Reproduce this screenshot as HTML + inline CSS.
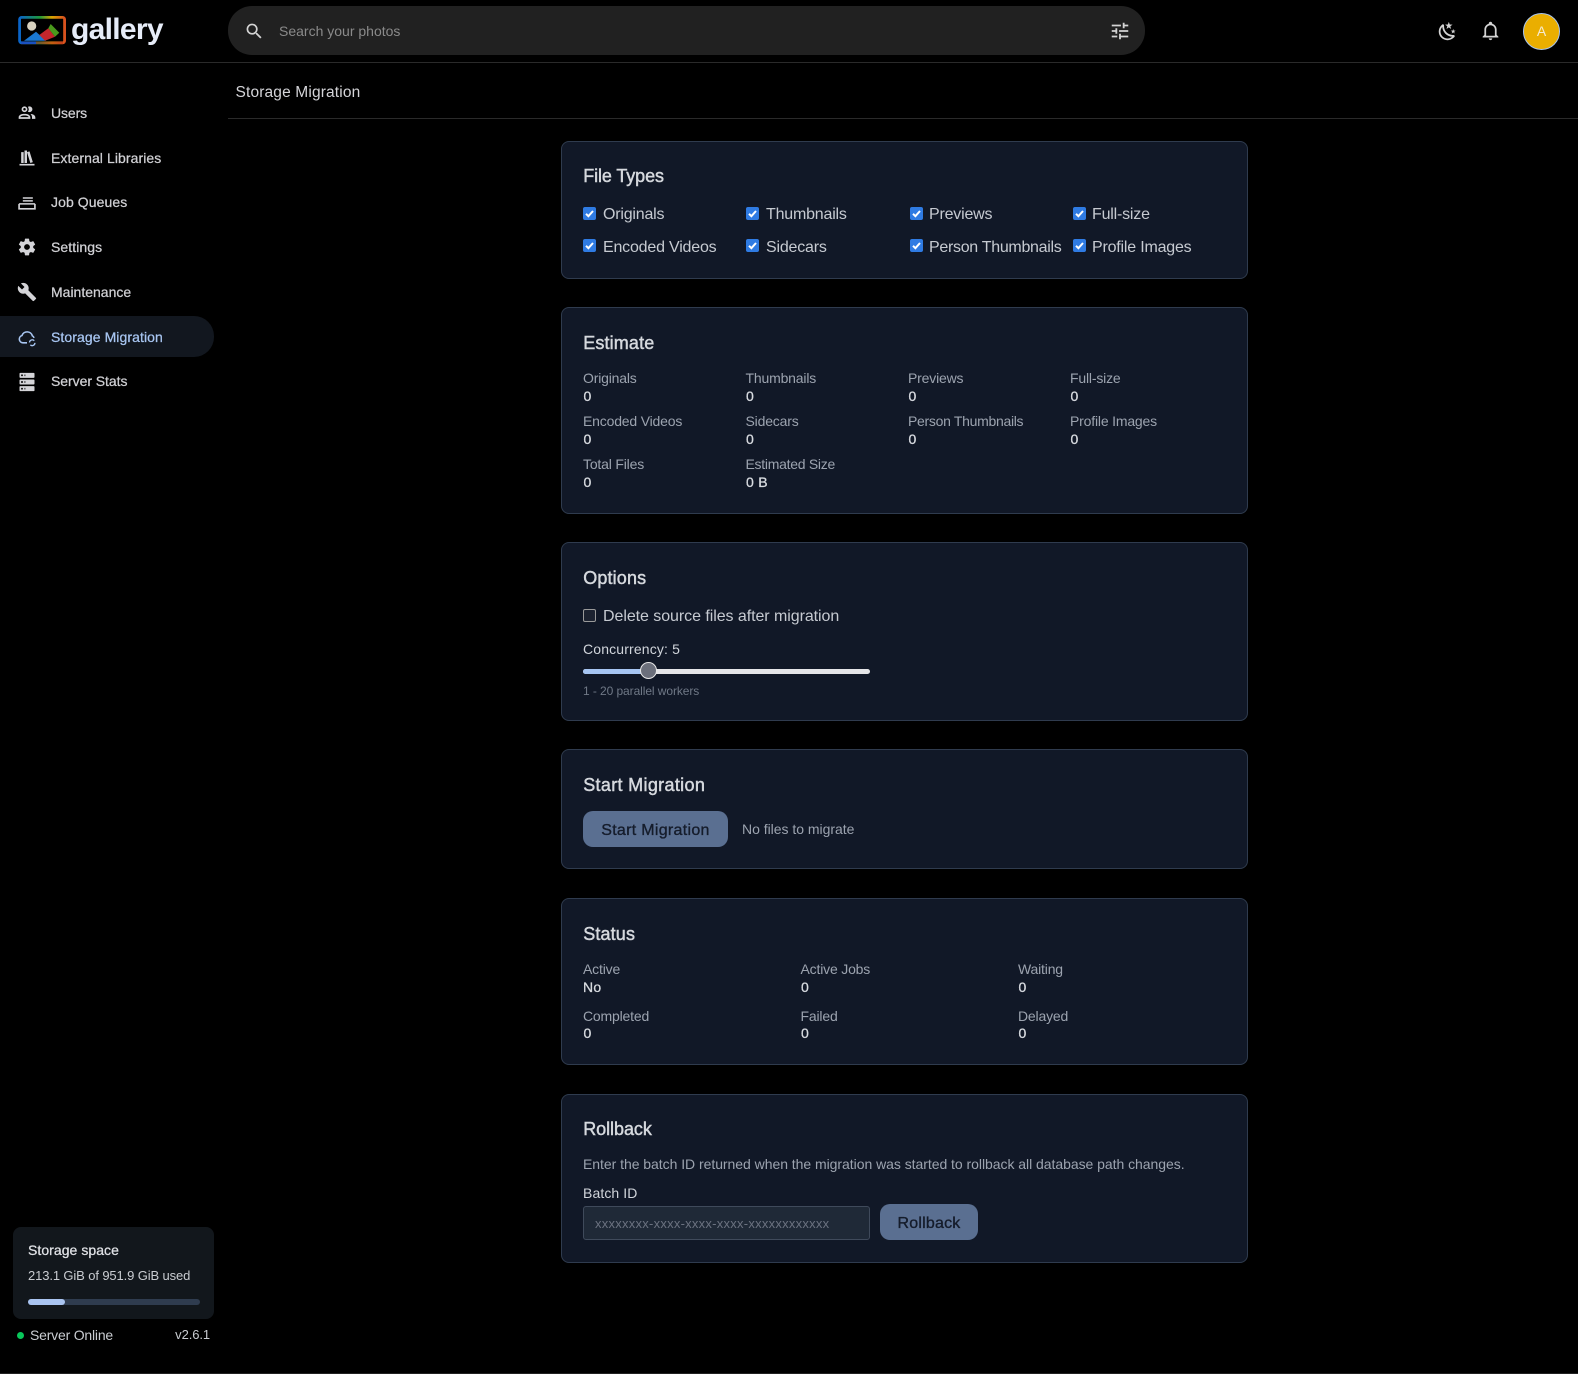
<!DOCTYPE html>
<html lang="en"><head><meta charset="utf-8"><title>Storage Migration</title>
<style>
html,body{margin:0;padding:0;background:#000;width:1578px;height:1374px;overflow:hidden}
body{position:relative;font-family:"Liberation Sans",sans-serif;color:#e5e7eb}
.a{position:absolute}
.t{position:absolute;line-height:20px;height:20px;white-space:nowrap}
.nav{font-size:14px;color:#d0d0d4;left:51px;font-weight:400;letter-spacing:.08px;-webkit-text-stroke:.25px #d0d0d4}
.card{position:absolute;left:561px;width:685px;background:#111827;border:1px solid #2f3b4e;border-radius:8px}
.h{left:583.2px;font-size:18px;color:#d6d9de;letter-spacing:.15px;-webkit-text-stroke:.45px #d6d9de}
.cb{position:absolute;width:13px;height:13px;background:#2f7be3;border-radius:2px}
.cb svg{position:absolute;left:0;top:0}
.l{font-size:16px;color:#c6cad1;letter-spacing:-.2px}
.k{font-size:14px;color:#9ca3af;letter-spacing:-.18px}
.v{font-size:14px;color:#d8dbe0;letter-spacing:.3px;-webkit-text-stroke:.3px #d8dbe0}
.btn{position:absolute;background:#5a6f91;border-radius:10px;color:#151c2b;font-size:16px;text-align:center;letter-spacing:.2px;-webkit-text-stroke:.35px #151c2b}
svg{position:absolute;display:block}
</style></head><body>

<!-- logo -->
<svg style="left:18px;top:15px" width="49" height="31" viewBox="0 0 49 31">
<defs><linearGradient id="r" x1="0" y1="0" x2="1" y2="0"><stop offset="0" stop-color="#0a64c8"/><stop offset=".45" stop-color="#1f9a3a"/><stop offset=".72" stop-color="#d9a400"/><stop offset="1" stop-color="#d8501f"/></linearGradient></defs>
<rect x="1.6" y="2.4" width="45" height="25.4" rx="2" fill="none" stroke="url(#r)" stroke-width="2.8"/>
<path d="M3 27.8H45" stroke="#b3261f" stroke-width="2.6" opacity=".55"/>
<path d="M3 27.8H18" stroke="#1a50c0" stroke-width="2.6"/>
<circle cx="13.7" cy="11" r="4.6" fill="#d8d2c0"/>
<path d="M6 25.7L18 16.7L28 25.7Z" fill="#1a78d2"/>
<path d="M21.3 20L30.3 13.3L37 21.7L27 25.7Z" fill="#c4262c"/>
<path d="M30.3 13.3L32.7 9L41.3 17.7L37 21.7Z" fill="#4a9a1c"/>
</svg>
<div class="t" style="left:71px;top:13px;height:34px;line-height:34px;font-size:30px;font-weight:bold;color:#e6ecf8;letter-spacing:-.7px">gallery</div>

<div class="a" style="left:0;top:62px;width:1578px;height:1px;background:#2a2a2a"></div>

<!-- search -->
<div class="a" style="left:228px;top:6px;width:917px;height:49px;background:#212121;border-radius:24px"></div>
<svg style="left:243.5px;top:20.5px" width="20.5" height="20.5" viewBox="0 0 24 24" fill="#d4d4d4"><path d="M9.5,3A6.5,6.5 0 0,1 16,9.5C16,11.11 15.41,12.59 14.44,13.73L14.71,14H15.5L20.5,19L19,20.5L14,15.5V14.71L13.73,14.44C12.59,15.41 11.11,16 9.5,16A6.5,6.5 0 0,1 3,9.5A6.5,6.5 0 0,1 9.5,3M9.5,5C7,5 5,7 5,9.5C5,12 7,14 9.5,14C12,14 14,12 14,9.5C14,7 12,5 9.5,5Z"/></svg>
<div class="t" style="left:279px;top:21px;font-size:14px;color:#8a8a8a;letter-spacing:0">Search your photos</div>
<svg style="left:1108.5px;top:20px" width="22" height="22" viewBox="0 0 24 24" fill="#d4d4d4"><path d="M3,17V19H9V17H3M3,5V7H13V5H3M13,21V19H21V17H13V15H11V21H13M7,9V11H3V13H7V15H9V9H7M21,13V11H11V13H21M15,9H17V7H21V5H17V3H15V9Z"/></svg>
<svg style="left:1437.3px;top:20.5px" width="21" height="21" viewBox="0 0 24 24" fill="#d4d4d4"><path d="M17.75,4.09L15.22,6.03L16.13,9.09L13.5,7.28L10.87,9.09L11.78,6.03L9.25,4.09L12.44,4L13.5,1L14.56,4L17.75,4.09M21.25,11L19.61,12.25L20.2,14.23L18.5,13.06L16.8,14.23L17.39,12.25L15.75,11L17.81,10.95L18.5,9L19.19,10.95L21.25,11M18.97,15.95C19.8,15.87 20.69,17.05 20.16,17.8C19.84,18.25 19.5,18.67 19.08,19.07C15.17,23 8.84,23 4.94,19.07C1.03,15.17 1.03,8.83 4.94,4.93C5.34,4.53 5.76,4.17 6.21,3.85C6.96,3.32 8.14,4.21 8.06,5.04C7.79,7.9 8.75,10.87 10.95,13.06C13.14,15.26 16.1,16.22 18.97,15.95M17.33,17.97C14.5,17.81 11.7,16.64 9.53,14.5C7.36,12.31 6.2,9.5 6.04,6.68C3.23,9.82 3.34,14.64 6.35,17.66C9.37,20.67 14.19,20.78 17.33,17.97Z"/></svg>
<svg style="left:1479.8px;top:20px" width="21" height="21" viewBox="0 0 24 24" fill="#d4d4d4"><path d="M10 21H14C14 22.1 13.1 23 12 23S10 22.1 10 21M21 19V20H3V19L5 17V11C5 7.9 7 5.2 10 4.3V4C10 2.9 10.9 2 12 2S14 2.9 14 4V4.3C17 5.2 19 7.9 19 11V17L21 19M17 11C17 8.2 14.8 6 12 6S7 8.2 7 11V18H17V11Z"/></svg>
<div class="a" style="left:1523px;top:13px;width:35px;height:35px;border-radius:50%;background:#eaae00;border:1px solid #a9c4ea;color:#f5ead0;font-size:14px;line-height:35px;text-align:center">A</div>

<!-- page title -->
<div class="t" style="left:235.5px;top:83px;font-size:15.5px;color:#d4d4d8;letter-spacing:.15px">Storage Migration</div>
<div class="a" style="left:228px;top:118px;width:1350px;height:1px;background:#2a2a2a"></div>

<!-- nav -->
<div class="a" style="left:0;top:316px;width:214px;height:41px;background:#12171f;border-radius:0 20px 20px 0"></div>
<svg style="left:16.7px;top:103px" width="20" height="20" viewBox="0 0 24 24" fill="#d4d4d8"><path d="M13.07 10.41A5 5 0 0 0 13.07 4.59A3.39 3.39 0 0 1 15 4A3.5 3.5 0 0 1 15 11A3.39 3.39 0 0 1 13.07 10.41M5.5 7.5A3.5 3.5 0 1 1 9 11A3.5 3.5 0 0 1 5.5 7.5M7.5 7.5A1.5 1.5 0 1 0 9 6A1.5 1.5 0 0 0 7.5 7.5M16 17V19H2V17S2 13 9 13 16 17 16 17M14 17C13.86 16.22 12.67 15 9 15S4.07 16.29 4 17M15.95 13A5.32 5.32 0 0 1 18 17V19H22V17S22 13.37 15.94 13Z"/></svg>
<div class="t nav" style="top:103px;letter-spacing:-.1px">Users</div>
<svg style="left:16.7px;top:148px" width="20" height="20" viewBox="0 0 24 24" fill="#d4d4d8"><path d="M9 3V18H12V3H9M12 5L16 18L19 17L15 4L12 5M5 5V18H8V5H5M3 19V21H21V19H3Z"/></svg>
<div class="t nav" style="top:148px">External Libraries</div>
<svg style="left:16.7px;top:192.5px" width="20" height="20" viewBox="0 0 24 24" fill="none" stroke="#d4d4d8" stroke-width="2"><path d="M2.5 13V19H21.5V13"/><path d="M2.5 13H21.5M7 9.5H19M7 6H19" stroke-width="1.8"/></svg>
<div class="t nav" style="top:192px">Job Queues</div>
<svg style="left:16.7px;top:237px" width="20" height="20" viewBox="0 0 24 24" fill="#d4d4d8"><path d="M12,15.5A3.5,3.5 0 0,1 8.5,12A3.5,3.5 0 0,1 12,8.5A3.5,3.5 0 0,1 15.5,12A3.5,3.5 0 0,1 12,15.5M19.43,12.97C19.47,12.65 19.5,12.33 19.5,12C19.5,11.67 19.47,11.34 19.43,11L21.54,9.37C21.73,9.22 21.78,8.95 21.66,8.73L19.66,5.27C19.54,5.05 19.27,4.96 19.05,5.05L16.56,6.05C16.04,5.66 15.5,5.32 14.87,5.07L14.5,2.42C14.46,2.18 14.25,2 14,2H10C9.75,2 9.54,2.18 9.5,2.42L9.13,5.07C8.5,5.32 7.96,5.66 7.44,6.05L4.95,5.05C4.73,4.96 4.46,5.05 4.34,5.27L2.34,8.73C2.21,8.95 2.27,9.22 2.46,9.37L4.57,11C4.53,11.34 4.5,11.67 4.5,12C4.5,12.33 4.53,12.65 4.57,12.97L2.46,14.63C2.27,14.78 2.21,15.05 2.34,15.27L4.34,18.73C4.46,18.95 4.73,19.03 4.95,18.95L7.44,17.94C7.96,18.34 8.5,18.68 9.13,18.93L9.5,21.58C9.54,21.82 9.75,22 10,22H14C14.25,22 14.46,21.82 14.5,21.58L14.87,18.93C15.5,18.67 16.04,18.34 16.56,17.94L19.05,18.95C19.27,19.03 19.54,18.95 19.66,18.73L21.66,15.27C21.78,15.05 21.73,14.78 21.54,14.63L19.43,12.97Z"/></svg>
<div class="t nav" style="top:237px">Settings</div>
<svg style="left:16.7px;top:281.7px" width="20" height="20" viewBox="0 0 24 24" fill="#d4d4d8"><path d="M22.7,19L13.6,9.9C14.5,7.6 14,4.9 12.1,3C10.1,1 7.1,0.6 4.7,1.7L9,6L6,9L1.6,4.7C0.4,7.1 0.9,10.1 2.9,12.1C4.8,14 7.5,14.5 9.8,13.6L18.9,22.7C19.3,23.1 19.9,23.1 20.3,22.7L22.6,20.4C23.1,20 23.1,19.3 22.7,19Z"/></svg>
<div class="t nav" style="top:282px;letter-spacing:0">Maintenance</div>
<svg style="left:16.7px;top:327px" width="20" height="20" viewBox="0 0 24 24" fill="none" stroke="#a8c6f2" stroke-width="1.9"><path d="M12 19H7A4.5 4.5 0 0 1 6 10.2A6.5 6.5 0 0 1 18.4 10.6A4 4 0 0 1 20.5 13"/><path d="M15 18.5A3.3 3.3 0 0 1 20.7 16.5M21.5 19A3.3 3.3 0 0 1 16 21.5" stroke-width="1.6"/></svg>
<div class="t nav" style="top:327px;color:#a8c6f2;-webkit-text-stroke:.25px #a8c6f2">Storage Migration</div>
<svg style="left:16.7px;top:371.7px" width="20" height="20" viewBox="0 0 24 24" fill="#d4d4d8"><path d="M4,1H20A1,1 0 0,1 21,2V6A1,1 0 0,1 20,7H4A1,1 0 0,1 3,6V2A1,1 0 0,1 4,1M4,9H20A1,1 0 0,1 21,10V14A1,1 0 0,1 20,15H4A1,1 0 0,1 3,14V10A1,1 0 0,1 4,9M4,17H20A1,1 0 0,1 21,18V22A1,1 0 0,1 20,23H4A1,1 0 0,1 3,22V18A1,1 0 0,1 4,17M9,5H10V3H9V5M9,13H10V11H9V13M9,21H10V19H9V21M5,3V5H7V3H5M5,11V13H7V11H5M5,19V21H7V19H5Z"/></svg>
<div class="t nav" style="top:371px;letter-spacing:-.05px">Server Stats</div>

<!-- storage -->
<div class="a" style="left:13px;top:1227px;width:201px;height:92px;background:#12171c;border-radius:8px"></div>
<div class="t" style="left:28px;top:1240px;font-size:14px;color:#e0e2e6;letter-spacing:.05px;-webkit-text-stroke:.25px #e0e2e6">Storage space</div>
<div class="t" style="left:28px;top:1266px;font-size:13px;color:#c9ccd1;letter-spacing:-.12px">213.1 GiB of 951.9 GiB used</div>
<div class="a" style="left:28px;top:1299px;width:172px;height:6px;border-radius:3px;background:#2f3c4f"></div>
<div class="a" style="left:28px;top:1299px;width:37px;height:6px;border-radius:3px;background:#a9c4f0"></div>
<div class="a" style="left:17px;top:1332px;width:7px;height:7px;border-radius:50%;background:#08c75a"></div>
<div class="t" style="left:30px;top:1325px;font-size:14px;color:#c9ccd1;letter-spacing:-.2px">Server Online</div>
<div class="t" style="right:1368px;top:1325px;font-size:13px;color:#c9ccd1;letter-spacing:-.1px">v2.6.1</div>
<div class="a" style="left:0;top:1373px;width:1578px;height:1px;background:#222"></div>

<!-- File types -->
<div class="card" style="top:141px;height:136px"></div>
<div class="t h" style="top:166px;letter-spacing:-.1px">File Types</div>
<div class="cb" style="left:583px;top:207px"><svg width="13" height="13" viewBox="0 0 13 13"><path d="M3 6.8L5.4 9.2L10 4" fill="none" stroke="#fff" stroke-width="2"/></svg></div>
<div class="t l" style="left:603px;top:205px">Originals</div>
<div class="cb" style="left:746px;top:207px"><svg width="13" height="13" viewBox="0 0 13 13"><path d="M3 6.8L5.4 9.2L10 4" fill="none" stroke="#fff" stroke-width="2"/></svg></div>
<div class="t l" style="left:766px;top:205px">Thumbnails</div>
<div class="cb" style="left:909.5px;top:207px"><svg width="13" height="13" viewBox="0 0 13 13"><path d="M3 6.8L5.4 9.2L10 4" fill="none" stroke="#fff" stroke-width="2"/></svg></div>
<div class="t l" style="left:929px;top:205px">Previews</div>
<div class="cb" style="left:1072.5px;top:207px"><svg width="13" height="13" viewBox="0 0 13 13"><path d="M3 6.8L5.4 9.2L10 4" fill="none" stroke="#fff" stroke-width="2"/></svg></div>
<div class="t l" style="left:1092px;top:205px">Full-size</div>
<div class="cb" style="left:583px;top:239px"><svg width="13" height="13" viewBox="0 0 13 13"><path d="M3 6.8L5.4 9.2L10 4" fill="none" stroke="#fff" stroke-width="2"/></svg></div>
<div class="t l" style="left:603px;top:238px">Encoded Videos</div>
<div class="cb" style="left:746px;top:239px"><svg width="13" height="13" viewBox="0 0 13 13"><path d="M3 6.8L5.4 9.2L10 4" fill="none" stroke="#fff" stroke-width="2"/></svg></div>
<div class="t l" style="left:766px;top:238px">Sidecars</div>
<div class="cb" style="left:909.5px;top:239px"><svg width="13" height="13" viewBox="0 0 13 13"><path d="M3 6.8L5.4 9.2L10 4" fill="none" stroke="#fff" stroke-width="2"/></svg></div>
<div class="t l" style="left:929px;top:238px;letter-spacing:-.3px">Person Thumbnails</div>
<div class="cb" style="left:1072.5px;top:239px"><svg width="13" height="13" viewBox="0 0 13 13"><path d="M3 6.8L5.4 9.2L10 4" fill="none" stroke="#fff" stroke-width="2"/></svg></div>
<div class="t l" style="left:1092px;top:238px">Profile Images</div>

<!-- Estimate -->
<div class="card" style="top:307px;height:205px"></div>
<div class="t h" style="top:333px">Estimate</div>
<div class="t k" style="left:583px;top:367.5px">Originals</div><div class="t v" style="left:583.5px;top:385.5px">0</div>
<div class="t k" style="left:745.5px;top:367.5px">Thumbnails</div><div class="t v" style="left:746px;top:385.5px">0</div>
<div class="t k" style="left:908px;top:367.5px">Previews</div><div class="t v" style="left:908.5px;top:385.5px">0</div>
<div class="t k" style="left:1070px;top:367.5px">Full-size</div><div class="t v" style="left:1070.5px;top:385.5px">0</div>
<div class="t k" style="left:583px;top:410.5px">Encoded Videos</div><div class="t v" style="left:583.5px;top:428.5px">0</div>
<div class="t k" style="left:745.5px;top:410.5px">Sidecars</div><div class="t v" style="left:746px;top:428.5px">0</div>
<div class="t k" style="left:908px;top:410.5px;letter-spacing:-.3px">Person Thumbnails</div><div class="t v" style="left:908.5px;top:428.5px">0</div>
<div class="t k" style="left:1070px;top:410.5px">Profile Images</div><div class="t v" style="left:1070.5px;top:428.5px">0</div>
<div class="t k" style="left:583px;top:454px">Total Files</div><div class="t v" style="left:583.5px;top:472px">0</div>
<div class="t k" style="left:745.5px;top:454px;letter-spacing:-.28px">Estimated Size</div><div class="t v" style="left:746px;top:472px">0 B</div>

<!-- Options -->
<div class="card" style="top:542px;height:177px"></div>
<div class="t h" style="top:568px">Options</div>
<div class="a" style="left:583px;top:609px;width:11px;height:11px;background:#1c2230;border:1px solid #9a9a9a;border-radius:2px"></div>
<div class="t l" style="left:603px;top:607px;letter-spacing:-.06px">Delete source files after migration</div>
<div class="t" style="left:583px;top:639px;font-size:14px;color:#d1d5db;letter-spacing:.15px">Concurrency: 5</div>
<div class="a" style="left:583px;top:668.5px;width:287px;height:5px;border-radius:3px;background:#e5e5e8"></div>
<div class="a" style="left:583px;top:668.5px;width:66px;height:5px;border-radius:3px 0 0 3px;background:#a6c5f2"></div>
<div class="a" style="left:640px;top:662px;width:15px;height:15px;border-radius:50%;background:#6b6f7b;border:1.5px solid #e8e8e8"></div>
<div class="t" style="left:583px;top:681px;font-size:12px;color:#6f7886;letter-spacing:-.08px">1 - 20 parallel workers</div>

<!-- Start -->
<div class="card" style="top:749px;height:118px"></div>
<div class="t h" style="top:775px;letter-spacing:.33px">Start Migration</div>
<div class="btn" style="left:583px;top:811px;width:145px;height:36px;line-height:39px;letter-spacing:.3px">Start Migration</div>
<div class="t" style="left:742px;top:818.5px;font-size:14px;color:#9ca3af;letter-spacing:-.02px">No files to migrate</div>

<!-- Status -->
<div class="card" style="top:898px;height:165px"></div>
<div class="t h" style="top:924px">Status</div>
<div class="t k" style="left:583px;top:959px">Active</div><div class="t v" style="left:583px;top:977px">No</div>
<div class="t k" style="left:800.5px;top:959px">Active Jobs</div><div class="t v" style="left:801px;top:977px">0</div>
<div class="t k" style="left:1018px;top:959px">Waiting</div><div class="t v" style="left:1018.5px;top:977px">0</div>
<div class="t k" style="left:583px;top:1005.5px">Completed</div><div class="t v" style="left:583.5px;top:1022.5px">0</div>
<div class="t k" style="left:800.5px;top:1005.5px">Failed</div><div class="t v" style="left:801px;top:1022.5px">0</div>
<div class="t k" style="left:1018px;top:1005.5px">Delayed</div><div class="t v" style="left:1018.5px;top:1022.5px">0</div>

<!-- Rollback -->
<div class="card" style="top:1094px;height:167px"></div>
<div class="t h" style="top:1119px;letter-spacing:-.05px">Rollback</div>
<div class="t k" style="left:583px;top:1154px;letter-spacing:-.04px">Enter the batch ID returned when the migration was started to rollback all database path changes.</div>
<div class="t" style="left:583px;top:1183px;font-size:14px;color:#d1d5db;letter-spacing:.1px">Batch ID</div>
<div class="a" style="left:583px;top:1206px;width:285px;height:32px;background:#1f2937;border:1px solid #3f4a5b;border-radius:3px"></div>
<div class="t" style="left:595px;top:1214px;font-size:13px;color:#6b7280;letter-spacing:.25px">xxxxxxxx-xxxx-xxxx-xxxx-xxxxxxxxxxxx</div>
<div class="btn" style="left:880px;top:1204px;width:98px;height:36px;line-height:39px">Rollback</div>
</body></html>
